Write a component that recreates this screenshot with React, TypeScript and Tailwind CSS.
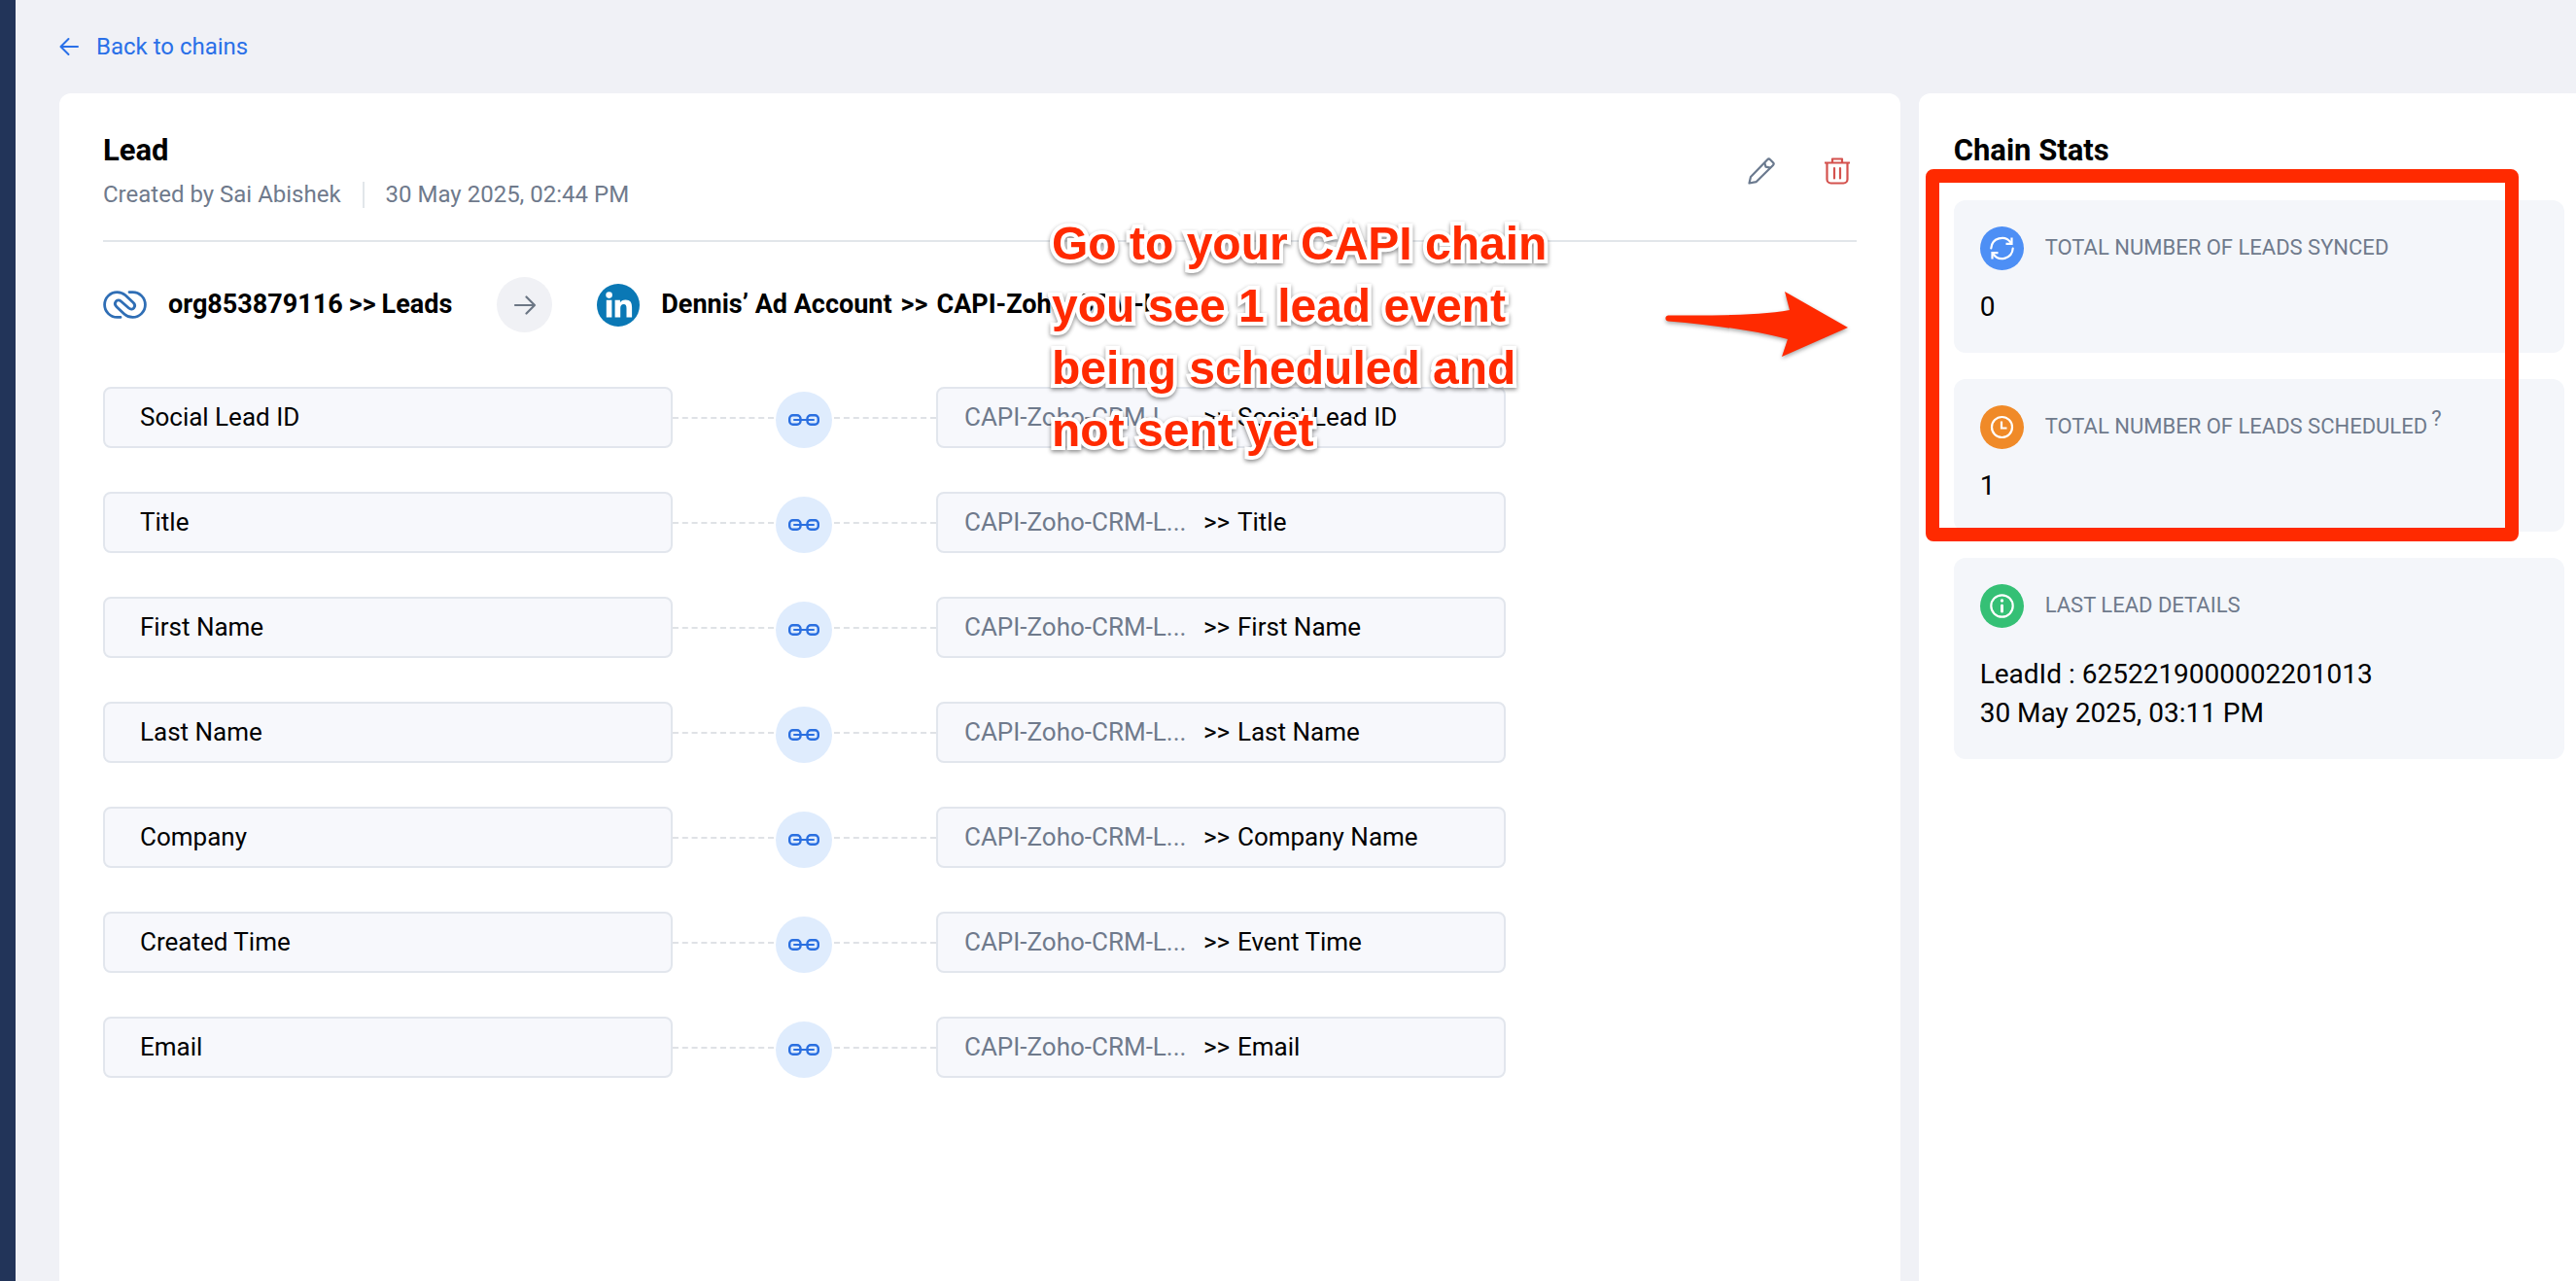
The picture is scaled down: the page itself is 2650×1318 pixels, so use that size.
import type { ReactNode } from 'react';

const mappings = [
  { source: 'Social Lead ID', target: 'Social Lead ID' },
  { source: 'Title', target: 'Title' },
  { source: 'First Name', target: 'First Name' },
  { source: 'Last Name', target: 'Last Name' },
  { source: 'Company', target: 'Company Name' },
  { source: 'Created Time', target: 'Event Time' },
  { source: 'Email', target: 'Email' },
];

function BackArrow() {
  return (
    <svg width="20" height="20" viewBox="0 0 20 20" fill="none" stroke="currentColor" strokeWidth="2" strokeLinecap="round" strokeLinejoin="round" aria-hidden="true">
      <path d="M19 10H1.5M9.5 2L1.5 10l8 8" />
    </svg>
  );
}

function CrmLogo() {
  return (
    <svg width="45" height="29" viewBox="0 0 45 29" fill="none" stroke="#2f6eb5" strokeWidth="2.8" strokeLinecap="round" aria-hidden="true">
      <path d="M18 27.4H14.5A12.9 12.9 0 0 1 14.5 1.6C18 1.6 21 3 23 4.8L31 12.3C35 16 30.5 21.5 26.5 18L18.5 11C14.5 7.5 10 13 14 16.7L22 24.2C24 26 27 27.4 30.5 27.4A12.9 12.9 0 0 0 30.5 1.6H27" />
    </svg>
  );
}

function LinkedInLogo() {
  return (
    <svg width="44" height="44" viewBox="0 0 44 44" aria-hidden="true">
      <circle cx="22" cy="22" r="22" fill="#0a78b5" />
      <circle cx="12.6" cy="11.6" r="3.3" fill="#fff" />
      <path fill="#fff" d="M9.8 16.8h5.6v17.6H9.8zM18.6 16.8h5.3v2.5c.9-1.6 2.8-2.9 5.6-2.9 5 0 6.6 3 6.6 7.9v10.1h-5.6v-9.2c0-2.4-.5-4.2-2.9-4.2-2.5 0-3.4 1.8-3.4 4.3v9.1h-5.6z" />
    </svg>
  );
}

function PencilIcon() {
  return (
    <svg width="28" height="28" viewBox="0 0 28 28" fill="none" stroke="#6b7a8f" strokeWidth="2.2" strokeLinejoin="round" aria-hidden="true">
      <path d="M1.5 26.5L3 20 20.2 2.2a2 2 0 0 1 2.8 0l3 3a2 2 0 0 1 0 2.8L8.5 25.2z" />
      <path d="M17.2 5.2l1.3 4.5 4.8 1" />
    </svg>
  );
}

function TrashIcon() {
  return (
    <svg width="28" height="28" viewBox="0 0 28 28" fill="none" stroke="#d4524e" strokeWidth="2.2" strokeLinejoin="round" aria-hidden="true">
      <path d="M1 5.5h26M9 5.5V1.5h10v4M3.5 5.5v17a4 4 0 0 0 4 4h13a4 4 0 0 0 4-4v-17" />
      <path d="M11 11v10.5M17 11v10.5" strokeLinecap="round" />
    </svg>
  );
}

function LinkIcon() {
  return (
    <svg width="32" height="12" viewBox="0 0 32 12" fill="none" stroke="#2a6fe0" strokeWidth="2.4" aria-hidden="true">
      <rect x="1.2" y="1.2" width="11.3" height="9.6" rx="3.5" />
      <rect x="19.5" y="1.2" width="11.3" height="9.6" rx="3.5" />
      <path d="M6 6h20" strokeWidth="2" strokeLinecap="round" />
    </svg>
  );
}

function SyncIcon() {
  return (
    <svg width="25" height="25" viewBox="0 0 25 25" fill="none" stroke="#fff" strokeWidth="2.2" aria-hidden="true">
      <path d="M1.3 12.5A11.2 11.2 0 0 1 21.5 6.5M23.7 12.5A11.2 11.2 0 0 1 3.5 18.5" strokeLinecap="round" />
      <path d="M22.5 1.5v6.3h-6M2.5 23.5v-6.3h6" />
    </svg>
  );
}

function ClockIcon() {
  return (
    <svg width="25" height="25" viewBox="0 0 25 25" fill="none" stroke="#fff" strokeWidth="2.2" aria-hidden="true">
      <circle cx="12.5" cy="12.5" r="10.5" />
      <path d="M12 6.5v7h5.5" />
    </svg>
  );
}

function InfoIcon() {
  return (
    <svg width="25" height="25" viewBox="0 0 25 25" fill="none" stroke="#fff" strokeWidth="2.2" aria-hidden="true">
      <circle cx="12.5" cy="12.5" r="11.2" />
      <path d="M12.5 12v6" strokeWidth="3" strokeLinecap="round" />
      <circle cx="12.5" cy="7" r="1.7" fill="#fff" stroke="none" />
    </svg>
  );
}

function StatCard({ icon, tone, label, hint, children }: { icon: ReactNode; tone: string; label: string; hint?: string; children: ReactNode }) {
  return (
    <section className="rounded-xl bg-[#f4f6fa] p-[27px]">
      <div className="flex items-center gap-[22px]">
        <span className={`flex size-[45px] shrink-0 items-center justify-center rounded-full ${tone}`}>{icon}</span>
        <h3 className="flex pb-[2px] text-[22px] leading-7 whitespace-nowrap text-[#6f7a8c]">
          {label}
          {hint && <span className="ml-1 -translate-y-2">{hint}</span>}
        </h3>
      </div>
      {children}
    </section>
  );
}

function MappingRow({ source, target }: { source: string; target: string }) {
  return (
    <li className="grid grid-cols-[minmax(0,1fr)_271px_minmax(0,1fr)] items-center">
      <div className="flex h-[63px] items-center rounded-lg border-2 border-[#e2e6ed] bg-[#f7f8fc] px-9">{source}</div>
      <div className="flex items-center gap-[2px]">
        <span className="flex-1 border-t-2 border-dashed border-[#dfe2e6]" />
        <span className="mt-1 flex size-[58px] items-center justify-center rounded-full bg-[#dfecfd]">
          <LinkIcon />
        </span>
        <span className="flex-1 border-t-2 border-dashed border-[#dfe2e6]" />
      </div>
      <div className="flex h-[63px] items-center rounded-lg border-2 border-[#e2e6ed] bg-[#f7f8fc] px-[27px] whitespace-nowrap">
        <span className="w-[246px] text-[#6f7a8c]">CAPI-Zoho-CRM-L...</span>
        <span className="w-[35px]">&gt;&gt;</span>
        <span>{target}</span>
      </div>
    </li>
  );
}

export default function App() {
  return (
    <div className="flex min-h-screen overflow-hidden bg-[#f0f1f6] font-['Roboto','Liberation_Sans',sans-serif] text-black">
      <aside className="w-4 shrink-0 bg-[#223459]" />
      <div className="flex flex-1 flex-col pl-[45px]">
        <nav className="flex py-[34px]">
          <a href="#chains" className="flex items-center gap-[18px] text-2xl leading-7 text-[#2a70e8]">
            <BackArrow />
            Back to chains
          </a>
        </nav>

        <div className="grid flex-1 grid-cols-[minmax(0,14fr)_minmax(0,5fr)] gap-[19px]">
          <main className="relative rounded-t-xl bg-white px-[45px] pt-[41px]">
            <header className="flex items-center justify-between border-b-2 border-[#e2e6ea] pb-[33px]">
              <div>
                <h1 className="text-[31px] leading-9 font-bold">Lead</h1>
                <p className="mt-[14px] flex text-2xl leading-[27px] text-[#6f7a8c]">
                  <span className="border-r-2 border-[#e2e6ea] pr-[22px]">Created by Sai Abishek</span>
                  <time className="pl-[22px]">30 May 2025, 02:44 PM</time>
                </p>
              </div>
              <div className="flex gap-[50px] pr-[6px]">
                <button type="button" aria-label="Edit chain">
                  <PencilIcon />
                </button>
                <button type="button" aria-label="Delete chain">
                  <TrashIcon />
                </button>
              </div>
            </header>

            <div className="mt-9 flex items-center text-[27px] font-bold whitespace-nowrap">
              <CrmLogo />
              <span className="ml-[22px] flex gap-[6px]">
                <span>org853879116</span>
                <span>&gt;&gt;</span>
                <span>Leads</span>
              </span>
              <span className="ml-[46px] flex size-[57px] items-center justify-center rounded-full bg-[#f0f1f5]">
                <svg width="24" height="20" viewBox="0 0 24 20" fill="none" stroke="#6b7684" strokeWidth="2.2" strokeLinecap="round" strokeLinejoin="round" aria-hidden="true">
                  <path d="M2 10h20M13.5 1.5L22 10l-8.5 8.5" />
                </svg>
              </span>
              <span className="ml-[46px]">
                <LinkedInLogo />
              </span>
              <span className="ml-[22px] flex gap-[9px]">
                <span>Dennis’ Ad Account</span>
                <span>&gt;&gt;</span>
                <span>CAPI-Zoho-CRM-L</span>
              </span>
            </div>

            <ul className="mt-14 flex w-4/5 flex-col gap-[45px] text-[26px]">
              {mappings.map((m) => (
                <MappingRow key={m.source} source={m.source} target={m.target} />
              ))}
            </ul>

            <p className="absolute top-[123px] left-[1021px] font-['Liberation_Sans',Arial,sans-serif] text-5xl leading-[64px] font-bold whitespace-nowrap text-[#ff2a00] drop-shadow-[0_2px_2px_rgba(0,0,0,0.45)] [-webkit-text-stroke:8px_white] [paint-order:stroke_fill] [stroke-linejoin:round]">
              Go to your CAPI chain
              <br />
              you see 1 lead event
              <br />
              being scheduled and
              <br />
              not sent yet
            </p>
            <svg className="absolute top-[200px] right-[53px] drop-shadow-[0_2px_2px_rgba(0,0,0,0.35)]" width="192" height="76" viewBox="0 0 192 76" aria-hidden="true">
              <path fill="#ff2a00" d="M6 28.5C50 28.5 100 29 131 23L126 4 191 41 123 71 129 53C100 45 50 38 6 34.5C2.5 34 2.5 29 6 28.5Z" />
            </svg>
          </main>

          <aside className="rounded-tl-xl bg-white pt-[41px] pr-3 pl-9">
            <h2 className="text-[31px] leading-9 font-bold">Chain Stats</h2>
            <div className="relative mt-[33px] flex flex-col gap-[27px]">
              <StatCard icon={<SyncIcon />} tone="bg-[#4d8ff5]" label="TOTAL NUMBER OF LEADS SYNCED">
                <p className="mt-[18px] text-[28px] leading-10">0</p>
              </StatCard>
              <StatCard icon={<ClockIcon />} tone="bg-[#f08a28]" label="TOTAL NUMBER OF LEADS SCHEDULED" hint="?">
                <p className="mt-[18px] text-[28px] leading-10">1</p>
              </StatCard>
              <div className="pointer-events-none absolute -top-8 right-[47px] -bottom-[10px] -left-[29px] rounded-lg border-[14px] border-[#ff2a00]" />
            </div>
            <div className="mt-[27px]">
              <StatCard icon={<InfoIcon />} tone="bg-[#35c075]" label="LAST LEAD DETAILS">
                <p className="mt-7 text-[28px] leading-10">LeadId : 6252219000002201013</p>
                <p className="text-[28px] leading-10">30 May 2025, 03:11 PM</p>
              </StatCard>
            </div>
          </aside>
        </div>
      </div>
    </div>
  );
}
